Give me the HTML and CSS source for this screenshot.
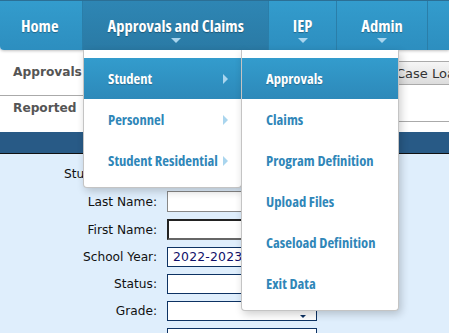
FILE: index.html
```html
<!DOCTYPE html>
<html>
<head>
<meta charset="utf-8">
<link rel="stylesheet" href="styles.css">
</head>
<body>
<div class="page">
  <nav class="topnav">
    <a class="nav-item home">Home</a>
    <a class="nav-item active">Approvals and Claims<span class="caret"></span></a>
    <a class="nav-item">IEP<span class="caret"></span></a>
    <a class="nav-item">Admin<span class="caret"></span></a>
    <a class="nav-item rest"></a>
  </nav>

  <div class="tabs">
    <div class="tab-col">
      <div class="tab first">Approvals</div>
      <div class="tab">Reported</div>
    </div>
    <div class="tab-main">
      <div class="btn-row"><button class="btn">Case Load Report</button></div>
    </div>
  </div>
  <div class="bar"></div>

  <div class="search">
    <div class="row"><label>Student SASID:</label><input class="field"></div>
    <div class="row"><label>Last Name:</label><input class="field gray"></div>
    <div class="row"><label>First Name:</label><input class="field focus"></div>
    <div class="row sel-row"><label>School Year:</label><div class="field sel">2022-2023</div></div>
    <div class="row sel-row"><label>Status:</label><div class="field sel"></div></div>
    <div class="row sel-row"><label>Grade:</label><div class="field sel"><span class="sel-arrow"></span></div></div>
    <div class="row sel-row"><label>Type:</label><div class="field sel"></div></div>
  </div>

  <ul class="menu m1">
    <li class="hl">Student<span class="arr"></span></li>
    <li>Personnel<span class="arr"></span></li>
    <li>Student Residential<span class="arr"></span></li>
  </ul>
  <ul class="menu m2">
    <li class="hl">Approvals</li>
    <li>Claims</li>
    <li>Program Definition</li>
    <li>Upload Files</li>
    <li>Caseload Definition</li>
    <li>Exit Data</li>
  </ul>
</div>
</body>
</html>
```

FILE: styles.css
```css
* { box-sizing: border-box; }
html, body { margin: 0; padding: 0; }
body {
  width: 449px;
  height: 333px;
  overflow: hidden;
  background: #dfeefc;
  font-family: "DejaVu Sans", Verdana, sans-serif;
  font-size: 12.2px;
}
.page { position: relative; width: 449px; height: 333px; overflow: hidden; }

.topnav {
  display: flex;
  height: 50px;
  background: linear-gradient(#339ccd, #2d8ebf);
  border-top: 1px solid #2b6f95;
  border-bottom-left-radius: 4px;
  box-shadow: 0 1px 3px rgba(0,0,0,0.25);
  position: relative;
  z-index: 1;
}
.nav-item {
  position: relative;
  display: flex;
  align-items: center;
  justify-content: center;
  height: 100%;
  padding: 0 24px 1px;
  color: #fff;
  font-family: "Open Sans", sans-serif;
  font-stretch: 75%;
  font-weight: bold;
  font-size: 16.5px;
  border-right: 1px solid #2a7ea9;
  text-shadow: 0 1px 1px rgba(0,0,0,0.3);
  white-space: nowrap;
}
.nav-item.home { padding-left: 21px; }
.nav-item.active { background: linear-gradient(#2e86b4, #2a7aa5); }
.nav-item.rest { flex: 1; padding: 0; border-right: 0; }
.caret {
  position: absolute;
  left: 50%;
  bottom: 7px;
  margin-left: -5px;
  width: 0; height: 0;
  border-left: 5px solid transparent;
  border-right: 5px solid transparent;
  border-top: 5px solid #a9d5ee;
}

.tabs { display: flex; background: #fff; height: 82px; }
.tab-col { width: 84px; border-right: 1px solid #ddd; }
.tab {
  color: #555;
  font-weight: bold;
  padding: 0 0 0 13px;
  height: 36px;
  line-height: 24px;
}
.tab.first { height: 46px; padding-top: 10px; border-bottom: 1px solid #aaa; }
.tab-main { flex: 1; }
.btn-row {
  height: 72px;
  border-bottom: 1px solid #aaa;
  display: flex;
  justify-content: flex-end;
  padding-top: 11px;
}
.btn {
  height: 24px;
  width: 61px;
  padding: 0 0 0 7px;
  font-family: inherit;
  font-size: 13px;
  color: #333;
  text-align: left;
  white-space: nowrap;
  overflow: hidden;
  border: 1px solid #aaa;
  border-right: 0;
  background: linear-gradient(#f6f6f6, #dcdcdc);
}
.bar {
  height: 22px;
  background: #285a86;
  border-bottom: 1px solid #111;
}

.search { display: flex; flex-direction: column; gap: 7px; padding-top: 9px; }
.row { display: flex; align-items: center; height: 21px; }
.row.sel-row { height: 20px; }
.row label {
  width: 157px;
  text-align: right;
  color: #111;
  white-space: nowrap;
}
.field {
  margin-left: 10px;
  width: 150px;
  height: 100%;
  border: 1px solid #0d3263;
  background: #fff;
  font-family: inherit;
  font-size: 12.4px;
  padding: 0 5px;
  line-height: 18px;
  color: #10106a;
  position: relative;
  letter-spacing: 0.2px;
}
.field.gray {
  border-color: #888;
  background: linear-gradient(90deg, #fff 70%, #eee);
}
.field.focus {
  border: 2px solid #222;
  border-bottom-color: #666;
  border-right-color: #666;
}
.sel-arrow {
  position: absolute;
  right: 10px;
  bottom: 2px;
  border-left: 3px solid transparent;
  border-right: 3px solid transparent;
  border-top: 3px solid #0d3263;
}

.menu {
  position: absolute;
  top: 50px;
  margin: 0;
  list-style: none;
  padding: 8px 0 6px;
  background: #fff;
  border: 1px solid #c4c4c4;
  border-top: 0;
  border-radius: 0 0 4px 4px;
  box-shadow: 2px 3px 8px rgba(0,0,0,0.2);
  z-index: 2;
}
.m1 { left: 83px; width: 159px; }
.m2 { left: 241px; width: 158px; }
.menu li {
  position: relative;
  height: 41px;
  line-height: 41px;
  padding-left: 24px;
  color: #2f86b8;
  font-family: "Open Sans", sans-serif;
  font-stretch: 75%;
  font-weight: bold;
  font-size: 14.6px;
  white-space: nowrap;
}
.menu li.hl {
  color: #fff;
  background: linear-gradient(#339ccd, #2d89b9);
  text-shadow: 0 1px 1px rgba(0,0,0,0.25);
}
.arr {
  position: absolute;
  right: 13px;
  top: 16px;
  border-top: 5px solid transparent;
  border-bottom: 5px solid transparent;
  border-left: 5px solid #a9d5ee;
}
```
